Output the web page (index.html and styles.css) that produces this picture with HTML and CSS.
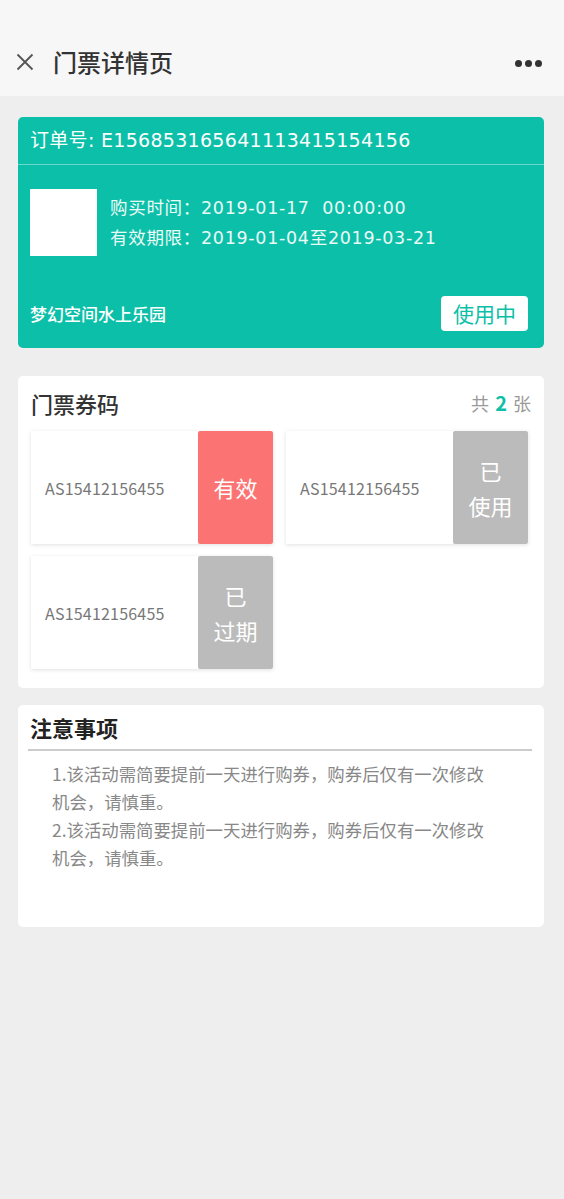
FILE: index.html
```html
<!DOCTYPE html>
<html lang="zh-CN">
<head>
<meta charset="utf-8">
<title>门票详情页</title>
<link rel="stylesheet" href="styles.css">
</head>
<body>
<header class="nav">
  <div class="nav-left">
    <svg class="close" width="18" height="18" viewBox="0 0 18 18"><path d="M1.5 1.5 L16.5 16.5 M16.5 1.5 L1.5 16.5" stroke="#555" stroke-width="1.8" fill="none"/></svg>
    <span class="nav-title">门票详情页</span>
  </div>
  <div class="more"><i></i><i></i><i></i></div>
</header>

<main class="page">
  <section class="order">
    <div class="order-head">订单号: E156853165641113415154156</div>
    <div class="order-body">
      <div class="order-info">
        <div class="thumb"></div>
        <div class="order-lines">
          <p>购买时间：2019-01-17&nbsp;&nbsp;00:00:00</p>
          <p>有效期限：2019-01-04至2019-03-21</p>
        </div>
      </div>
      <div class="order-foot">
        <span class="park">梦幻空间水上乐园</span>
        <span class="state">使用中</span>
      </div>
    </div>
  </section>

  <section class="card codes">
    <div class="codes-head">
      <h2 class="card-title">门票券码</h2>
      <span class="count">共 <b>2</b> 张</span>
    </div>
    <div class="ticket-grid">
      <div class="ticket">
        <span class="code">AS15412156455</span>
        <span class="status valid">有效</span>
      </div>
      <div class="ticket">
        <span class="code">AS15412156455</span>
        <span class="status gray">已<br>使用</span>
      </div>
      <div class="ticket">
        <span class="code">AS15412156455</span>
        <span class="status gray">已<br>过期</span>
      </div>
    </div>
  </section>

  <section class="card notes">
    <h2 class="card-title notes-title">注意事项</h2>
    <div class="notes-body">
      <p>1.该活动需简要提前一天进行购券，购券后仅有一次修改机会，请慎重。</p>
      <p>2.该活动需简要提前一天进行购券，购券后仅有一次修改机会，请慎重。</p>
    </div>
  </section>
</main>
</body>
</html>
```

FILE: styles.css
```css
* { box-sizing: border-box; }
html, body { margin: 0; padding: 0; }
body {
  background: #eeeeee;
  font-family: "Noto Sans CJK SC", "Noto Sans", sans-serif;
  width: 564px;
  min-height: 1199px;
}
p, h2 { margin: 0; }

.nav {
  height: 96px;
  background: #f7f7f7;
  display: flex;
  align-items: center;
  justify-content: space-between;
  padding: 28px 22px 0 16px;
}
.nav-left { display: flex; align-items: center; }
.close { display: block; margin-right: 19px; }
.nav-title { font-size: 24px; color: #333; line-height: 30px; font-weight: 500; }
.more { display: flex; gap: 3px; padding-top: 2px; }
.more i { width: 7px; height: 7px; border-radius: 50%; background: #333; display: block; }

.page { padding: 21px 20px 0 18px; }

.order {
  background: #0cbfa8;
  border-radius: 5px;
  color: #fff;
}
.order-head {
  height: 48px;
  line-height: 47px;
  padding-left: 12px;
  font-family: "DejaVu Sans", "Noto Sans CJK SC", sans-serif;
  font-size: 19px;
  letter-spacing: 0.3px;
  border-bottom: 1px solid #6ad9ca;
}
.order-body { padding: 24px 16px 17px 12px; }
.order-info { display: flex; align-items: flex-start; }
.thumb { width: 67px; height: 67px; background: #fff; margin-right: 13px; }
.order-lines { padding-top: 4px; }
.order-lines p {
  font-family: "DejaVu Sans", "Noto Sans CJK SC", sans-serif;
  font-size: 17.5px;
  line-height: 30px;
  color: #eafaf7;
  letter-spacing: 0.7px;
}
.order-foot {
  display: flex;
  justify-content: space-between;
  align-items: center;
  margin-top: 40px;
}
.park { font-size: 17px; font-weight: 500; }
.state {
  background: #fff;
  color: #0cbfa8;
  border-radius: 4px;
  font-size: 21px;
  line-height: 35px;
  padding: 0 12px;
}

.card {
  background: #fff;
  border-radius: 5px;
}
.codes { margin-top: 28px; padding: 10px 16px 19px 13px; }
.codes-head {
  display: flex;
  justify-content: space-between;
  align-items: center;
  height: 33px;
  margin-bottom: 12px;
}
.card-title { font-size: 22px; font-weight: 500; color: #333; }
.count { font-size: 18px; color: #999; margin-right: -3px; }
.count b { color: #0cbfa8; font-weight: 600; font-size: 20px; margin: 0 2px; }

.ticket-grid {
  display: grid;
  grid-template-columns: 242px 242px;
  column-gap: 13px;
  row-gap: 12px;
}
.ticket {
  height: 113px;
  display: flex;
  background: #fff;
  box-shadow: 0 1px 4px rgba(0,0,0,0.12);
}
.code {
  flex: 1;
  display: flex;
  align-items: center;
  padding-left: 14px;
  font-size: 16px;
  color: #777;
  letter-spacing: 0.2px;
}
.status {
  width: 75px;
  display: flex;
  align-items: center;
  justify-content: center;
  text-align: center;
  color: #fff;
  font-size: 22px;
  line-height: 35px;
  border-radius: 2px;
}
.status.valid { background: #fc7373; }
.status.gray { background: #bbbbbb; }

.notes { margin-top: 17px; padding: 6px 12px 55px 10px; }
.notes-title {
  line-height: 32px;
  color: #222;
  font-weight: 600;
  padding-left: 2px;
  padding-bottom: 6px;
  border-bottom: 2px solid #cccccc;
}
.notes-body {
  padding: 9px 0 0 24px;
  width: 462px;
}
.notes-body p { font-size: 17.4px; line-height: 28px; color: #888; }
```
